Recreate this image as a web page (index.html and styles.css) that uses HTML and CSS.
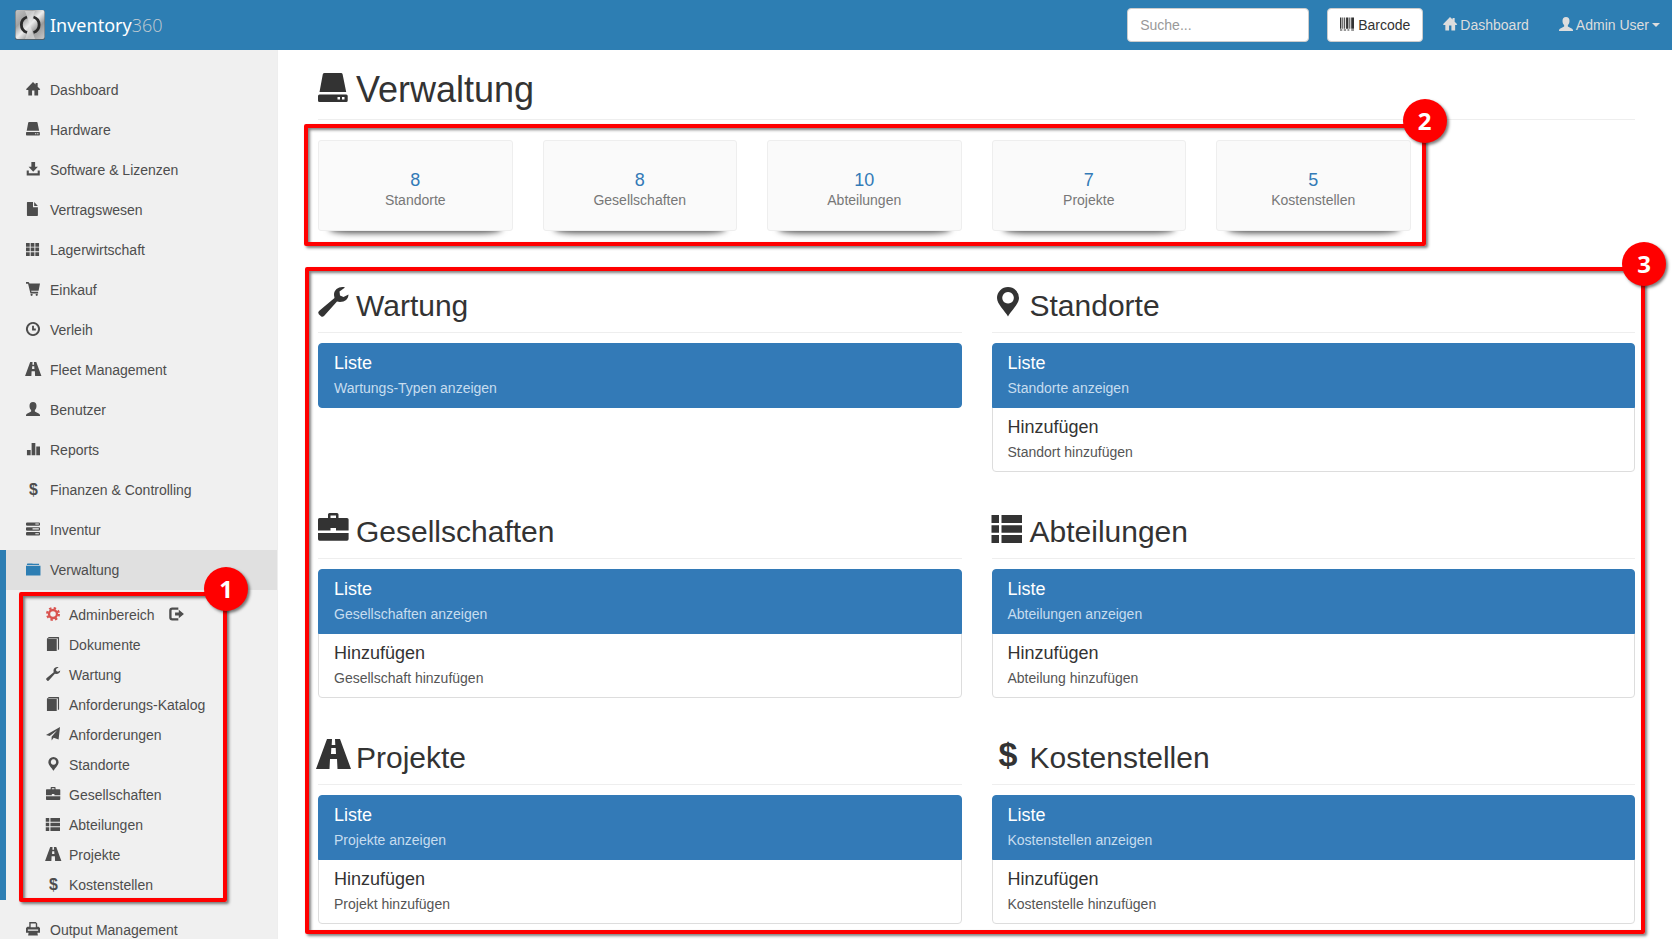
FILE: index.html
```
<!DOCTYPE html>
<html lang="de">
  <head>
    <meta charset="UTF-8">
    <meta name="viewport" content="width=device-width, initial-scale=1.0">
    <title>Inventory360 - Verwaltung</title>
    <link rel="stylesheet" href="styles.css">
  </head>
  <body>

    <!-- icon set, all on a 30x30 grid -->
    <svg class="sprite" aria-hidden="true">
      <symbol id="home" viewBox="0 0 30 30"><path d="M15 0L20.500 5.500V2H25V10L30.500 15.500L29 17H26V29H18V18H13V29H5V17H1.500L0 15.500Z"/></symbol>
      <symbol id="hdd" viewBox="0 0 30 30"><path d="M6.500 0H23Q24.300 0 24.600 1.200L28.200 19H1.500L4.800 1.200Q5.200 0 6.500 0ZM1.500 21.500H28.200Q29.700 21.500 29.700 23V27.500Q29.700 29 28.200 29H1.500Q0 29 0 27.500V23Q0 21.500 1.500 21.500ZM19.500 24V26.500H22V24ZM24 24V26.500H26.500V24Z" fill-rule="evenodd"/></symbol>
      <symbol id="download" viewBox="0 0 30 30"><path d="M11.500 0H19.500V10H25.500L15.500 21L5.500 10H11.500ZM1.500 18H6V24H25V18H29.500V29H1.500Z"/></symbol>
      <symbol id="file" viewBox="0 0 30 30"><path d="M3 0H15V11H25.500V28.500Q25.500 30 24 30H3.500Q2 30 2 28.500V1Q2 0 3 0ZM17.500 0L25.500 8.500H17.500Z"/></symbol>
      <symbol id="th" viewBox="0 0 30 30"><path d="M0 2H8V10H0ZM10 2H18V10H10ZM20 2H28V10H20ZM0 12H8V20H0ZM10 12H18V20H10ZM20 12H28V20H20ZM0 22H8V30H0ZM10 22H18V30H10ZM20 22H28V30H20Z"/></symbol>
      <symbol id="cart" viewBox="0 0 30 30"><path d="M0 0H4.500Q6.500 0 7 2L7.400 3H30L27 18.500H11L11.700 21H26V24.500H9.500L4.500 4H0Z"/><circle cx="12" cy="27.500" r="2.400"/><circle cx="23" cy="27.500" r="2.400"/></symbol>
      <symbol id="clock" viewBox="0 0 30 30"><path d="M15 2A13 13 0 1 1 14.900 2M15 8V16H21" fill="none" stroke="currentColor" stroke-width="4"/></symbol>
      <symbol id="road" viewBox="0 0 30 30"><path d="M9 0H14L13.700 6H17.300L17 0H22L33 30H19.500L19 20H12L11.500 30H-2ZM13.300 9L13 15H18L17.700 9Z" fill-rule="evenodd"/></symbol>
      <symbol id="user" viewBox="0 0 30 30"><path d="M15 0C20 0 22.500 3 22.500 8C22.500 12 21.500 15 19 17V20.500L28 25Q30 26 30 28.500V30H0V28.500Q0 26 2 25L11 20.500V17C8.500 15 7.500 12 7.500 8C7.500 3 10 0 15 0Z"/></symbol>
      <symbol id="stats" viewBox="0 0 30 30"><path d="M2 17H10V28.500H2ZM12 2H20V28.500H12ZM22 9.500H30V28.500H22Z"/></symbol>
      <symbol id="usd" viewBox="0 0 30 30"><text x="16" y="27" text-anchor="middle" class="usd-sign">$</text></symbol>
      <symbol id="tasks" viewBox="0 0 30 30"><path d="M1.500 1H28.500L30 2.500V6.500L28.500 8H1.500L0 6.500V2.500ZM20 3.200V5.600H27.500V3.200ZM1.500 11H28.500L30 12.500V17L28.500 18.500H1.500L0 17V12.500ZM14 13.500V16H27.500V13.500ZM1.500 21.500H28.500L30 23V27.500L28.500 29H1.500L0 27.500V23ZM20 24V26.500H27.500V24Z" fill-rule="evenodd"/></symbol>
      <symbol id="folder" viewBox="0 0 30 30"><path d="M3 3H13L15 4H28V6.500H2V5ZM0 8H31V29H0Z"/></symbol>
      <symbol id="cog" viewBox="0 0 30 30"><circle cx="15" cy="15" r="8.500" fill="none" stroke="currentColor" stroke-width="5"/><circle cx="15" cy="15" r="12.500" fill="none" stroke="currentColor" stroke-width="5" stroke-dasharray="5 4.817"/></symbol>
      <symbol id="book" viewBox="0 0 30 30"><path d="M6 0H27Q28 0 28 1V26L25.500 28.500V3H6L4 4.500H23V30H2V4Z"/></symbol>
      <symbol id="wrench" viewBox="0 0 30 30"><path d="M27 .5C22 -1 16 2 16 8L16.500 11L1 24Q-.5 25.500 .8 27.200L3 29.300Q4.500 30.500 6 29L19 14.500L22 15C27 15 30.500 12 30.500 7.500L25.500 10L22 8.500L21.500 4.500Z"/></symbol>
      <symbol id="send" viewBox="0 0 30 30"><path d="M30 0L0 17L8 19.500L24 7L12 21V29L16.500 23L27 27Z"/></symbol>
      <symbol id="marker" viewBox="0 0 30 30"><path d="M16 0A11 11 0 0 1 27 11C27 17 19 24 16 29.500C13 24 5 17 5 11A11 11 0 0 1 16 0ZM16 5A5.800 5.800 0 1 0 16.100 5Z" fill-rule="evenodd"/></symbol>
      <symbol id="briefcase" viewBox="0 0 30 30"><path d="M10 5V1.500Q10 0 11.500 0H19Q20.500 0 20.500 1.500V5H29Q30.600 5 30.600 6.500V17.500H18V15H12.500V17.500H0V6.500Q0 5 1.500 5ZM12.500 5H18V2.500H12.500ZM0 20H30.600V26Q30.600 27.700 29 27.700H1.500Q0 27.700 0 26Z" fill-rule="evenodd"/></symbol>
      <symbol id="thlist" viewBox="0 0 30 30"><path d="M-.5 2H7V10H-.5ZM9.500 2H30V10H9.500ZM-.5 12.200H7V19.800H-.5ZM9.500 12.200H30V19.800H9.500ZM-.5 22H7V30H-.5ZM9.500 22H30V30H9.500Z"/></symbol>
      <symbol id="logout" viewBox="0 0 30 30"><path d="M20 3.500H7Q3 3.500 3 7.500V22.500Q3 26.500 7 26.500H20" fill="none" stroke="currentColor" stroke-width="5"/><path d="M13 12H21V6L32 15L21 24V18H13Z"/></symbol>
      <symbol id="print" viewBox="0 0 30 30"><path d="M7 0H21L24 3V10H27L30 13V23H0V13L3 10H7ZM10 3V11H21V3ZM4 16V18.500H26V16ZM6 21H24L25.500 29H4.500Z"/></symbol>
      <symbol id="barcode" viewBox="0 0 30 30"><path d="M0 1H3V25H0ZM5 1H7V25H5ZM9 1H11V25H9ZM13 1H18V25H13ZM20 1H22V25H20ZM24 1H30V25H24ZM0 27H5V29H0ZM8 27H13V29H8ZM16 27H20V29H16ZM24 27H30V29H24Z"/></symbol>
    </svg>

    <header class="navbar">
      <a class="brand" href="#">
        <svg class="brand-logo" viewBox="0 0 30 30">
          <defs>
            <linearGradient id="metal" x1="0" y1="0" x2="1" y2="1">
              <stop offset="0" stop-color="#c4c4c4"/>
              <stop offset=".3" stop-color="#a2a2a2"/>
              <stop offset=".5" stop-color="#ededed"/>
              <stop offset=".7" stop-color="#9a9a9a"/>
              <stop offset="1" stop-color="#c8c8c8"/>
            </linearGradient>
          </defs>
          <rect width="30" height="30" rx="2" fill="#4d5f6b"/>
          <rect x=".5" width="29" height="29" rx="2" fill="url(#metal)"/>
          <path d="M15 15L10 1H20ZM15 15L20 29H10Z" fill="#eeeeee" opacity=".5"/>
          <path d="M12 7C4.500 9.500 4.500 20 12 22.500M18.500 7C26 9.500 26 20 18.500 22.500" fill="none" stroke="#2b2b2b" stroke-width="2.800"/>
        </svg>
        <span>Inventory<span class="brand-number">360</span></span>
      </a>
      <div class="navbar-right">
        <input class="search" type="text" placeholder="Suche..." aria-label="Suche">
        <button class="btn" type="button"><svg class="icon"><use href="#barcode"/></svg>Barcode</button>
        <a class="nav-link" href="#"><svg class="icon"><use href="#home"/></svg>Dashboard</a>
        <a class="nav-link" href="#"><svg class="icon"><use href="#user"/></svg>Admin User<span class="caret"></span></a>
      </div>
    </header>

    <div class="layout">
      <nav class="sidebar">
        <ul class="menu">
          <li><a href="#"><svg class="icon"><use href="#home"/></svg>Dashboard</a></li>
          <li><a href="#"><svg class="icon"><use href="#hdd"/></svg>Hardware</a></li>
          <li><a href="#"><svg class="icon"><use href="#download"/></svg>Software &amp; Lizenzen</a></li>
          <li><a href="#"><svg class="icon"><use href="#file"/></svg>Vertragswesen</a></li>
          <li><a href="#"><svg class="icon"><use href="#th"/></svg>Lagerwirtschaft</a></li>
          <li><a href="#"><svg class="icon"><use href="#cart"/></svg>Einkauf</a></li>
          <li><a href="#"><svg class="icon"><use href="#clock"/></svg>Verleih</a></li>
          <li><a href="#"><svg class="icon"><use href="#road"/></svg>Fleet Management</a></li>
          <li><a href="#"><svg class="icon"><use href="#user"/></svg>Benutzer</a></li>
          <li><a href="#"><svg class="icon"><use href="#stats"/></svg>Reports</a></li>
          <li><a href="#"><svg class="icon"><use href="#usd"/></svg>Finanzen &amp; Controlling</a></li>
          <li><a href="#"><svg class="icon"><use href="#tasks"/></svg>Inventur</a></li>
          <li class="active">
            <a href="#"><svg class="icon"><use href="#folder"/></svg>Verwaltung</a>
            <ul class="submenu">
              <li><a href="#"><svg class="icon icon-red"><use href="#cog"/></svg>Adminbereich<svg class="icon icon-after"><use href="#logout"/></svg></a></li>
              <li><a href="#"><svg class="icon"><use href="#book"/></svg>Dokumente</a></li>
              <li><a href="#"><svg class="icon"><use href="#wrench"/></svg>Wartung</a></li>
              <li><a href="#"><svg class="icon"><use href="#book"/></svg>Anforderungs-Katalog</a></li>
              <li><a href="#"><svg class="icon"><use href="#send"/></svg>Anforderungen</a></li>
              <li><a href="#"><svg class="icon"><use href="#marker"/></svg>Standorte</a></li>
              <li><a href="#"><svg class="icon"><use href="#briefcase"/></svg>Gesellschaften</a></li>
              <li><a href="#"><svg class="icon"><use href="#thlist"/></svg>Abteilungen</a></li>
              <li><a href="#"><svg class="icon"><use href="#road"/></svg>Projekte</a></li>
              <li><a href="#"><svg class="icon"><use href="#usd"/></svg>Kostenstellen</a></li>
              <li class="callout callout-menu"><span class="callout-badge">1</span></li>
            </ul>
          </li>
          <li><a href="#"><svg class="icon"><use href="#print"/></svg>Output Management</a></li>
        </ul>
      </nav>

      <main class="content">
        <h1><svg class="icon-lg"><use href="#hdd"/></svg>Verwaltung</h1>

        <div class="stats">
          <div class="stat"><a href="#">8</a><span>Standorte</span></div>
          <div class="stat"><a href="#">8</a><span>Gesellschaften</span></div>
          <div class="stat"><a href="#">10</a><span>Abteilungen</span></div>
          <div class="stat"><a href="#">7</a><span>Projekte</span></div>
          <div class="stat"><a href="#">5</a><span>Kostenstellen</span></div>
          <div class="callout callout-stats"><span class="callout-badge">2</span></div>
        </div>

        <div class="sections">
          <section>
            <h2><svg class="icon-lg"><use href="#wrench"/></svg>Wartung</h2>
            <div class="list-group">
              <a class="list-item active" href="#"><h4>Liste</h4><p>Wartungs-Typen anzeigen</p></a>
            </div>
          </section>
          <section>
            <h2><svg class="icon-lg"><use href="#marker"/></svg>Standorte</h2>
            <div class="list-group">
              <a class="list-item active" href="#"><h4>Liste</h4><p>Standorte anzeigen</p></a>
              <a class="list-item" href="#"><h4>Hinzufügen</h4><p>Standort hinzufügen</p></a>
            </div>
          </section>
          <section>
            <h2><svg class="icon-lg"><use href="#briefcase"/></svg>Gesellschaften</h2>
            <div class="list-group">
              <a class="list-item active" href="#"><h4>Liste</h4><p>Gesellschaften anzeigen</p></a>
              <a class="list-item" href="#"><h4>Hinzufügen</h4><p>Gesellschaft hinzufügen</p></a>
            </div>
          </section>
          <section>
            <h2><svg class="icon-lg"><use href="#thlist"/></svg>Abteilungen</h2>
            <div class="list-group">
              <a class="list-item active" href="#"><h4>Liste</h4><p>Abteilungen anzeigen</p></a>
              <a class="list-item" href="#"><h4>Hinzufügen</h4><p>Abteilung hinzufügen</p></a>
            </div>
          </section>
          <section>
            <h2><svg class="icon-lg"><use href="#road"/></svg>Projekte</h2>
            <div class="list-group">
              <a class="list-item active" href="#"><h4>Liste</h4><p>Projekte anzeigen</p></a>
              <a class="list-item" href="#"><h4>Hinzufügen</h4><p>Projekt hinzufügen</p></a>
            </div>
          </section>
          <section>
            <h2><svg class="icon-lg"><use href="#usd"/></svg>Kostenstellen</h2>
            <div class="list-group">
              <a class="list-item active" href="#"><h4>Liste</h4><p>Kostenstellen anzeigen</p></a>
              <a class="list-item" href="#"><h4>Hinzufügen</h4><p>Kostenstelle hinzufügen</p></a>
            </div>
          </section>
          <div class="callout callout-sections"><span class="callout-badge">3</span></div>
        </div>
      </main>
    </div>

  </body>
</html>
```

FILE: styles.css
```
* {
  box-sizing: border-box;
}

body {
  margin: 0;
  background-color: #ffffff;
  font-family: "Liberation Sans", Arial, sans-serif;
  font-size: 14px;
  line-height: 20px;
  color: #333333;
}

a {
  color: inherit;
  text-decoration: none;
}

ul {
  list-style: none;
  margin: 0;
  padding: 0;
}

h1, h2, h4, p {
  margin: 0;
  font-weight: normal;
}

/* icons */
.sprite {
  display: none;
}

svg {
  fill: currentColor;
  overflow: visible;
}

symbol {
  overflow: visible;
}

.icon {
  flex: none;
  width: 14px;
  height: 14px;
  margin-bottom: 2px;
}

.icon-lg {
  width: 30px;
  height: 30px;
  margin-top: -4px;
  vertical-align: -1px;
}

.icon-red {
  color: #d9534f;
}

.usd-sign {
  font-family: "Liberation Sans", Arial, sans-serif;
  font-size: 34px;
  font-weight: bold;
}

/* top bar */
.navbar {
  position: sticky;
  top: 0;
  z-index: 2;
  display: flex;
  justify-content: space-between;
  align-items: center;
  height: 50px;
  padding: 0 12px 0 15px;
  background-color: #2d7eb3;
  color: #dddddd;
}

.brand {
  display: flex;
  align-items: center;
  gap: 5px;
  font-family: "Noto Sans", sans-serif;
  font-size: 18px;
  color: #ffffff;
}

.brand-logo {
  width: 30px;
  height: 30px;
}

.brand-number {
  font-family: "Open Sans", sans-serif;
  font-weight: 300;
  color: #c3ccd2;
}

.navbar-right {
  display: flex;
  align-items: center;
}

.search {
  width: 182px;
  height: 34px;
  margin-right: 18px;
  padding: 6px 12px;
  border: 1px solid #cccccc;
  border-radius: 4px;
  background-color: #ffffff;
  font: inherit;
  color: #555555;
}

.search::placeholder {
  color: #999999;
}

.btn {
  display: flex;
  align-items: center;
  gap: 4px;
  height: 34px;
  margin-right: 20px;
  padding: 6px 12px;
  border: 1px solid #cccccc;
  border-radius: 4px;
  background-color: #ffffff;
  font: inherit;
  color: #333333;
  cursor: pointer;
}

.nav-link {
  display: flex;
  align-items: center;
  gap: 3px;
  margin-left: 30px;
}

.btn + .nav-link {
  margin-left: 0;
}

.caret {
  border-top: 4px solid;
  border-left: 4px solid transparent;
  border-right: 4px solid transparent;
}

/* sidebar */
.layout {
  display: flex;
  align-items: flex-start;
}

.sidebar {
  position: sticky;
  top: 50px;
  flex: none;
  width: 278px;
  height: calc(100vh - 50px);
  padding-top: 20px;
  overflow-y: auto;
  scrollbar-width: none;
  background-color: #f0f0f0;
  border-right: 1px solid #eeeeee;
}

.menu a {
  display: flex;
  align-items: center;
  gap: 10px;
  height: 40px;
  padding-left: 26px;
  color: #4d4d4d;
}

.menu > .active {
  border-left: 6px solid #2d7eb3;
  margin-bottom: 10px;
}

.menu > .active > a {
  padding-left: 20px;
  background-color: #e0e0e0;
}

.menu > .active > a .icon {
  color: #2d7eb3;
}

.submenu {
  position: relative;
  padding-top: 10px;
}

.submenu a {
  gap: 9px;
  height: 30px;
  padding-left: 40px;
}

.icon-after {
  margin-left: 5px;
}

/* content */
.content {
  flex: 1;
  min-width: 0;
  padding: 20px 37px 10px 40px;
}

h1 {
  margin-bottom: 20px;
  padding-bottom: 9px;
  border-bottom: 1px solid #eeeeee;
  font-size: 36px;
  line-height: 40px;
}

h2 {
  margin-bottom: 10px;
  padding-bottom: 10px;
  border-bottom: 1px solid #eeeeee;
  font-size: 30px;
  line-height: 33px;
}

h1 .icon-lg,
h2 .icon-lg {
  margin-right: 8px;
}

.stats {
  position: relative;
  display: grid;
  grid-template-columns: repeat(6, 1fr);
  column-gap: 30px;
  margin-bottom: 58px;
}

.stat {
  position: relative;
  display: flex;
  flex-direction: column;
  align-items: center;
  padding: 29px 0 20px;
  border: 1px solid #eeeeee;
  border-radius: 3px;
  background-color: #fafafa;
  color: #777777;
}

.stat a {
  font-size: 18px;
  color: #337ab7;
}

/* lifted shadow under the card */
.stat::after {
  content: "";
  position: absolute;
  z-index: -1;
  left: 10px;
  right: 10px;
  bottom: 0;
  height: 10px;
  border-radius: 20px / 5px;
  box-shadow: 0 3px 6px rgba(0, 0, 0, 0.7);
}

.sections {
  position: relative;
  display: grid;
  grid-template-columns: 1fr 1fr;
  gap: 43px 30px;
}

.list-item {
  display: block;
  padding: 10px 15px;
  border: 1px solid #dddddd;
  color: #555555;
}

.list-item + .list-item {
  margin-top: -1px;
}

.list-item:first-child {
  border-radius: 4px 4px 0 0;
}

.list-item:last-child {
  border-radius: 0 0 4px 4px;
}

.list-item:only-child {
  border-radius: 4px;
}

.list-item h4 {
  margin-bottom: 7px;
  font-size: 18px;
  line-height: 18px;
  color: #333333;
}

.list-item p {
  line-height: 18px;
}

.list-item.active {
  position: relative;
  background-color: #337ab7;
  border-color: #337ab7;
  color: #c7ddef;
}

.list-item.active h4 {
  color: #ffffff;
}

/* numbered callouts */
.callout {
  position: absolute;
  z-index: 1;
  border: 4px solid #ff0000;
  border-radius: 2px;
  box-shadow: 2px 2px 3px rgba(0, 0, 0, 0.5), inset 2px 2px 3px rgba(0, 0, 0, 0.5);
  pointer-events: none;
}

.callout-menu {
  top: 2px;
  bottom: -2px;
  left: 13px;
  width: 208px;
}

.callout-stats {
  grid-column: 1 / 6;
  inset: -16px -15px -15px -14px;
}

.callout-sections {
  inset: -22px -10px -10px -13px;
}

.callout-badge {
  position: absolute;
  top: -29px;
  right: -25px;
  width: 44px;
  height: 44px;
  border-radius: 50%;
  background-color: #ff0000;
  box-shadow: 2px 2px 3px rgba(0, 0, 0, 0.5);
  font-family: "Open Sans", sans-serif;
  font-size: 24px;
  font-weight: bold;
  line-height: 44px;
  text-align: center;
  color: #ffffff;
}
```
